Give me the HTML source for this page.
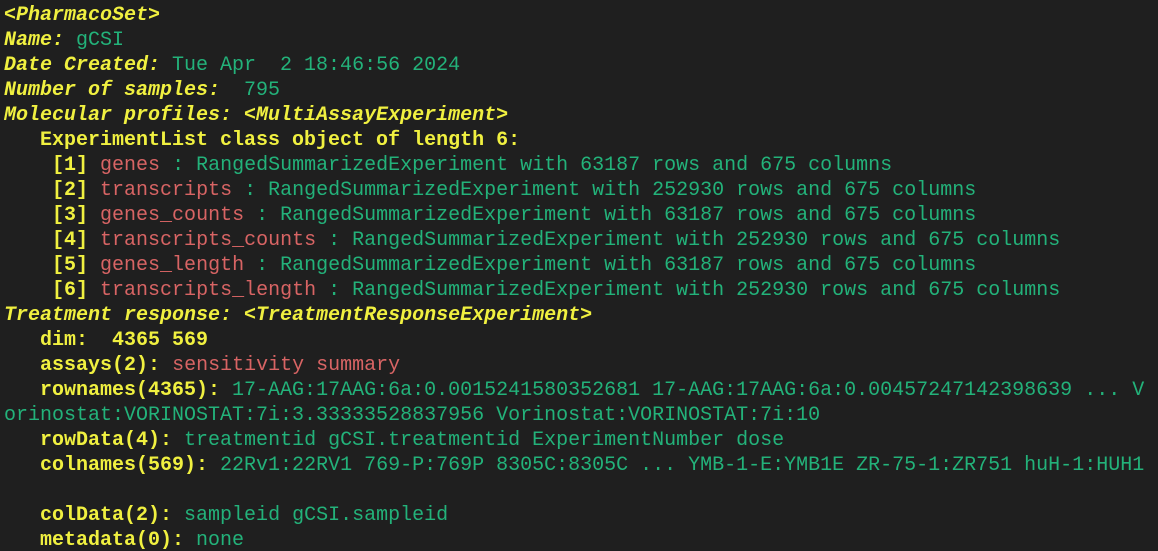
<!DOCTYPE html>
<html><head><style>
html,body{margin:0;padding:0;background:#1f1f1f;width:1158px;height:551px;overflow:hidden}
pre{margin:0;padding:3px 0 0 4px;font-family:"Liberation Mono",monospace;font-size:20px;line-height:25px;color:#23b27a;white-space:pre}
.y{color:#f0f040;font-weight:bold}
.i{font-style:italic}
.r{color:#d86464}
.g{color:#23b27a}
</style></head><body><pre><span class="y i">&lt;PharmacoSet&gt;</span>
<span class="y i">Name:</span> gCSI
<span class="y i">Date Created:</span> Tue Apr  2 18:46:56 2024
<span class="y i">Number of samples:</span>  795
<span class="y i">Molecular profiles: &lt;MultiAssayExperiment&gt;</span>
<span class="y">   ExperimentList class object of length 6:</span>
    <span class="y">[1]</span> <span class="r">genes</span> : RangedSummarizedExperiment with 63187 rows and 675 columns
    <span class="y">[2]</span> <span class="r">transcripts</span> : RangedSummarizedExperiment with 252930 rows and 675 columns
    <span class="y">[3]</span> <span class="r">genes_counts</span> : RangedSummarizedExperiment with 63187 rows and 675 columns
    <span class="y">[4]</span> <span class="r">transcripts_counts</span> : RangedSummarizedExperiment with 252930 rows and 675 columns
    <span class="y">[5]</span> <span class="r">genes_length</span> : RangedSummarizedExperiment with 63187 rows and 675 columns
    <span class="y">[6]</span> <span class="r">transcripts_length</span> : RangedSummarizedExperiment with 252930 rows and 675 columns
<span class="y i">Treatment response: &lt;TreatmentResponseExperiment&gt;</span>
   <span class="y">dim:  4365 569</span>
   <span class="y">assays(2):</span> <span class="r">sensitivity summary</span>
   <span class="y">rownames(4365):</span> 17-AAG:17AAG:6a:0.0015241580352681 17-AAG:17AAG:6a:0.00457247142398639 ... V
orinostat:VORINOSTAT:7i:3.33333528837956 Vorinostat:VORINOSTAT:7i:10
   <span class="y">rowData(4):</span> treatmentid gCSI.treatmentid ExperimentNumber dose
   <span class="y">colnames(569):</span> 22Rv1:22RV1 769-P:769P 8305C:8305C ... YMB-1-E:YMB1E ZR-75-1:ZR751 huH-1:HUH1

   <span class="y">colData(2):</span> sampleid gCSI.sampleid
   <span class="y">metadata(0):</span> none
</pre></body></html>
